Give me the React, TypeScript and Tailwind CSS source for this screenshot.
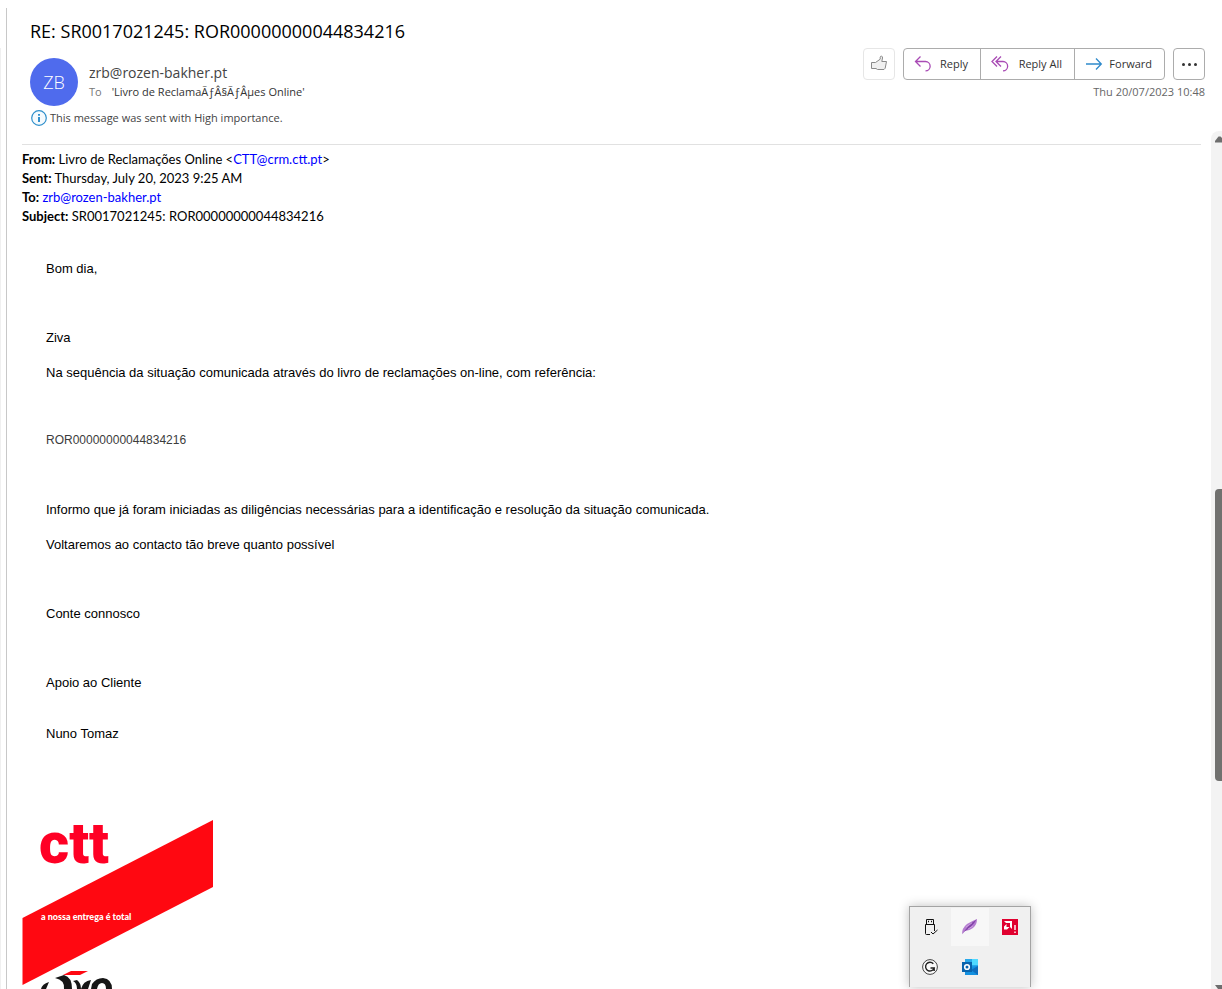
import type { ReactNode } from "react"

interface BodyLine {
  text: string
  gap: string
  style?: string
}

const BODY_LINES: BodyLine[] = [
  { text: "Bom dia,", gap: "mt-[34px]" },
  { text: "Ziva", gap: "mt-[52px]" },
  {
    text: "Na sequência da situação comunicada através do livro de reclamações on-line, com referência:",
    gap: "mt-[18px]",
  },
  { text: "ROR00000000044834216", gap: "mt-[51px]", style: "text-xs leading-[17px] text-[#3c3c3c]" },
  {
    text: "Informo que já foram iniciadas as diligências necessárias para a identificação e resolução da situação comunicada.",
    gap: "mt-[52px]",
  },
  { text: "Voltaremos ao contacto tão breve quanto possível", gap: "mt-[18px]" },
  { text: "Conte connosco", gap: "mt-[52px]" },
  { text: "Apoio ao Cliente", gap: "mt-[52px]" },
  { text: "Nuno Tomaz", gap: "mt-[34px]" },
]

function ThumbIcon() {
  return (
    <svg width="18" height="18" viewBox="0 0 18 18" fill="#f0f0f0" stroke="#8a8a8a">
      <path d="M1.5 7.5H5.5L10.2 4.2V2.2Q10.4 1 11.5 1.2Q12.8 1.4 12.5 3L11.8 6.5H16.5L15.2 13.2L14 14.5H7.5L6 13.5H1.5Z" />
    </svg>
  )
}

function ReplyIcon() {
  return (
    <svg width="18" height="18" viewBox="0 0 18 18" fill="none" stroke="#a94bb5" strokeWidth="1.3">
      <path d="M6.5 1.5L1.5 6.5L6.5 11.5M1.5 6.5H11.5A4.6 4.6 0 0 1 11.5 15.8" />
    </svg>
  )
}

function ReplyAllIcon() {
  return (
    <svg width="18" height="18" viewBox="0 0 18 18" fill="none" stroke="#a94bb5" strokeWidth="1.3">
      <path d="M6 1.5L1 6.5L6 11.5M10 1.5L5 6.5L10 11.5M5 6.5H12A4.6 4.6 0 0 1 12 15.8" />
    </svg>
  )
}

function ForwardIcon() {
  return (
    <svg width="18" height="18" viewBox="0 0 18 18" fill="none" stroke="#2f8acb" strokeWidth="1.3">
      <path d="M1 9H16M11 3.5L16.3 9L11 14.5" />
    </svg>
  )
}

function InfoIcon() {
  return (
    <svg width="16" height="16" viewBox="0 0 16 16" fill="none">
      <circle cx="8" cy="8" r="7.3" fill="#f5fafd" stroke="#2e8fcb" strokeWidth="1.2" />
      <path d="M8 7V12M8 4V5.8" stroke="#1e86c8" strokeWidth="1.8" />
    </svg>
  )
}

function ActionButton({ icon, label, className }: { icon: ReactNode; label: string; className: string }) {
  return (
    <button className={`flex h-full items-center justify-between pl-2.5 ${className}`}>
      {icon}
      {label}
    </button>
  )
}

function CttLogo() {
  return (
    <svg className="block overflow-visible" width="192" height="169" viewBox="0 0 192 169">
      <path d="M0.5 98L191 0V67L0.5 165Z" fill="#ff0811" />
      <text
        x="17"
        y="43"
        fontFamily="'Liberation Sans Narrow', Roboto, sans-serif"
        fontSize="58"
        fontWeight="900"
        fill="#ff0025"
      >
        ctt
      </text>
      <text x="19" y="100" fontFamily="Lato, sans-serif" fontSize="9" fontWeight="900" fill="#fff">
        a nossa entrega é total
      </text>
      {/* top of the anniversary mark, cut by the window edge */}
      <path d="M49 151H66L58 155H41Z" fill="#ff0811" />
      <path d="M19 169Q20 164 27 162L24 169Z" fill="#161616" />
      <path d="M33 158L42 155Q50 157 50 169H42Q43 160 33 158Z" fill="#161616" />
      <path d="M51 161L55 160Q59 163 59 169H55Q55 163 51 161ZM59 169Q61 161 69 160L66 169Z" fill="#161616" />
      <path d="M70 164Q74 158 81 158Q90 159 90 169H84Q84 163 80 163Q76 163 75 169H69Z" fill="#161616" />
    </svg>
  )
}

function UsbIcon() {
  return (
    <svg width="18" height="18" viewBox="0 0 18 18" fill="none" stroke="#111">
      <path d="M5.5 6V1.5H12.5V6M9 16.5H5.5Q4.5 16.5 4.5 15.5V6.5H13.5V13M10 14L12 16L16.5 12" />
      <path d="M7 3.5H8M10 3.5H11" strokeWidth="1.5" />
    </svg>
  )
}

function FeatherIcon() {
  return (
    <svg width="18" height="18" viewBox="0 0 18 18">
      <path d="M1 16Q1 10 6 6Q11 3 16 1Q16 7 12 10Q8 13 4 13Z" fill="#b47cd0" />
      <path d="M1 16.5Q7 7 15.5 1.5Q12 8 3.5 13.5Z" fill="#8142a8" />
      <path d="M5 9L11 5M7 11L12 8" stroke="#d8b8e6" strokeWidth="0.6" />
    </svg>
  )
}

function RadeonIcon() {
  return (
    <svg width="16" height="16" viewBox="0 0 16 16">
      <rect width="16" height="16" fill="#e0002f" />
      <path d="M2 2H10V10L8 8V4H4Z" fill="#fff" />
      <path d="M4.5 5L2 7.5V10.5H5L7.5 8H4.5Z" fill="#fff" />
      <path d="M13 6V11M13 12.5V14" stroke="#fff" strokeWidth="1.4" />
    </svg>
  )
}

function GrammarIcon() {
  return (
    <svg width="16" height="16" viewBox="0 0 16 16" fill="none">
      <circle cx="8" cy="8" r="7.4" fill="#fafafa" stroke="#444" />
      <path d="M11.3 4.7A4.4 4.4 0 1 0 12.2 9H8.5M12.2 8.5V12" stroke="#222" strokeWidth="1.4" />
    </svg>
  )
}

function OutlookIcon() {
  return (
    <svg width="16" height="16" viewBox="0 0 16 16">
      <rect x="3" y="0" width="13" height="10" fill="#28a8ea" />
      <rect x="10" y="0" width="6" height="6" fill="#50d9ff" />
      <path d="M3 8L16 7V16H3Z" fill="#1490df" />
      <path d="M9 11L16 7V16Z" fill="#0f6cbd" />
      <rect y="3" width="10" height="10" fill="#0a64ad" />
      <circle cx="5" cy="8" r="2.3" fill="none" stroke="#fff" strokeWidth="1.6" />
    </svg>
  )
}

const TRAY = [
  { name: "Safely remove hardware", icon: <UsbIcon /> },
  { name: "Feather", icon: <FeatherIcon />, active: true },
  { name: "Radeon", icon: <RadeonIcon /> },
  { name: "Grammar", icon: <GrammarIcon /> },
  { name: "Outlook", icon: <OutlookIcon /> },
]

function TrayPopup() {
  return (
    <div className="absolute right-[191px] bottom-0.5 grid h-[81px] w-[122px] auto-rows-[40px] grid-cols-3 border border-b-0 border-[#a3a3a3] bg-[#f0f0f0] shadow-[0_0_10px_rgba(0,0,0,0.25)]">
      {TRAY.map((item) => (
        <button
          key={item.name}
          aria-label={item.name}
          className={`m-px flex items-center justify-center ${item.active ? "bg-[#f7f7f7]" : ""}`}
        >
          {item.icon}
        </button>
      ))}
    </div>
  )
}

function MessageHeader() {
  return (
    <header className="h-[144px] pt-[19px] pl-[23px] font-['Open_Sans',sans-serif]">
      <h1 className="text-lg leading-6 text-black">RE: SR0017021245: ROR00000000044834216</h1>
      <div className="mt-[5px] flex items-start justify-between pr-1.5">
        <div className="flex pt-2.5">
          <div className="flex size-12 items-center justify-center rounded-full bg-[#4f6bed] text-lg font-light text-white">
            ZB
          </div>
          <div className="ml-[11px] pt-[5px]">
            <div className="text-sm leading-[19px] text-[#444]">zrb@rozen-bakher.pt</div>
            <div className="flex gap-2.5 text-[11px] leading-[19px] text-[#333]">
              <span className="text-[#777]">To</span>
              <span>'Livro de ReclamaÃƒÂ§ÃƒÂµes Online'</span>
            </div>
          </div>
        </div>
        <div className="text-[11px] text-[#333]">
          <div className="flex h-8 gap-2">
            <button
              aria-label="Like"
              className="flex w-8 items-center justify-center rounded border border-[#e6e6e6]"
            >
              <ThumbIcon />
            </button>
            <div className="flex divide-x divide-[#acacac] rounded border border-[#acacac]">
              <ActionButton icon={<ReplyIcon />} label="Reply" className="w-[77px] pr-3" />
              <ActionButton icon={<ReplyAllIcon />} label="Reply All" className="w-[94px] pr-3" />
              <ActionButton icon={<ForwardIcon />} label="Forward" className="w-[89px] pr-3" />
            </div>
            <button
              aria-label="More actions"
              className="flex w-8 items-center justify-center gap-[3px] rounded border border-[#acacac]"
            >
              <span className="size-[3px] rounded-full bg-[#333]" />
              <span className="size-[3px] rounded-full bg-[#333]" />
              <span className="size-[3px] rounded-full bg-[#333]" />
            </button>
          </div>
          <div className="mt-0.5 text-right leading-5 text-[#666]">Thu 20/07/2023 10:48</div>
        </div>
      </div>
      <div className="mt-1 flex items-center gap-[3px] pl-px text-[11px] leading-4 text-[#444]">
        <InfoIcon />
        This message was sent with High importance.
      </div>
    </header>
  )
}

export default function App() {
  return (
    <div className="relative flex h-screen overflow-hidden bg-white text-black">
      <div className="mt-12 w-px shrink-0 bg-[#f0f0f0]" />
      <div className="mt-2 ml-[5px] w-px shrink-0 bg-[#c8c8c8]" />
      <main className="min-w-0 flex-1">
        <MessageHeader />
        <div className="ml-[15px]">
          <hr className="mr-2.5 border-[#e1e1e1]" />
          <div className="pt-[5px] font-[Lato,sans-serif] text-[13px] leading-[19px]">
            <p>
              <b>From:</b> Livro de Reclamações Online &lt;
              <a href="mailto:CTT@crm.ctt.pt" className="text-[#0000ff]">
                CTT@crm.ctt.pt
              </a>
              &gt;
            </p>
            <p>
              <b>Sent:</b> Thursday, July 20, 2023 9:25 AM
            </p>
            <p>
              <b>To:</b>{" "}
              <a href="mailto:zrb@rozen-bakher.pt" className="text-[#0000ff]">
                zrb@rozen-bakher.pt
              </a>
            </p>
            <p>
              <b>Subject:</b> SR0017021245: ROR00000000044834216
            </p>
          </div>
          <div className="pl-6 font-['Liberation_Sans',sans-serif] text-[13px] leading-[17px]">
            {BODY_LINES.map((line) => (
              <p key={line.text} className={`${line.gap} ${line.style ?? ""}`}>
                {line.text}
              </p>
            ))}
          </div>
          <div className="mt-[78px]">
            <CttLogo />
          </div>
        </div>
      </main>
      {/* scrollbar */}
      <div className="mt-[131px] flex w-[11px] shrink-0 flex-col items-end overflow-hidden rounded-tl-lg bg-[#f3f3f3]">
        <svg className="mt-1 shrink-0" width="7" height="8" viewBox="0 0 7 8" fill="#6e6e6e">
          <path d="M0 7.5V6L3.5 1.5H5.5L7 3V7.5Z" />
        </svg>
        <div className="mt-[346px] h-[292px] w-[7px] shrink-0 rounded-l bg-[#71716f]" />
        <svg className="mt-auto shrink-0" width="7" height="4" viewBox="0 0 7 4" fill="#6e6e6e">
          <path d="M0 0H7V4H3Z" />
        </svg>
      </div>
      <TrayPopup />
    </div>
  )
}
